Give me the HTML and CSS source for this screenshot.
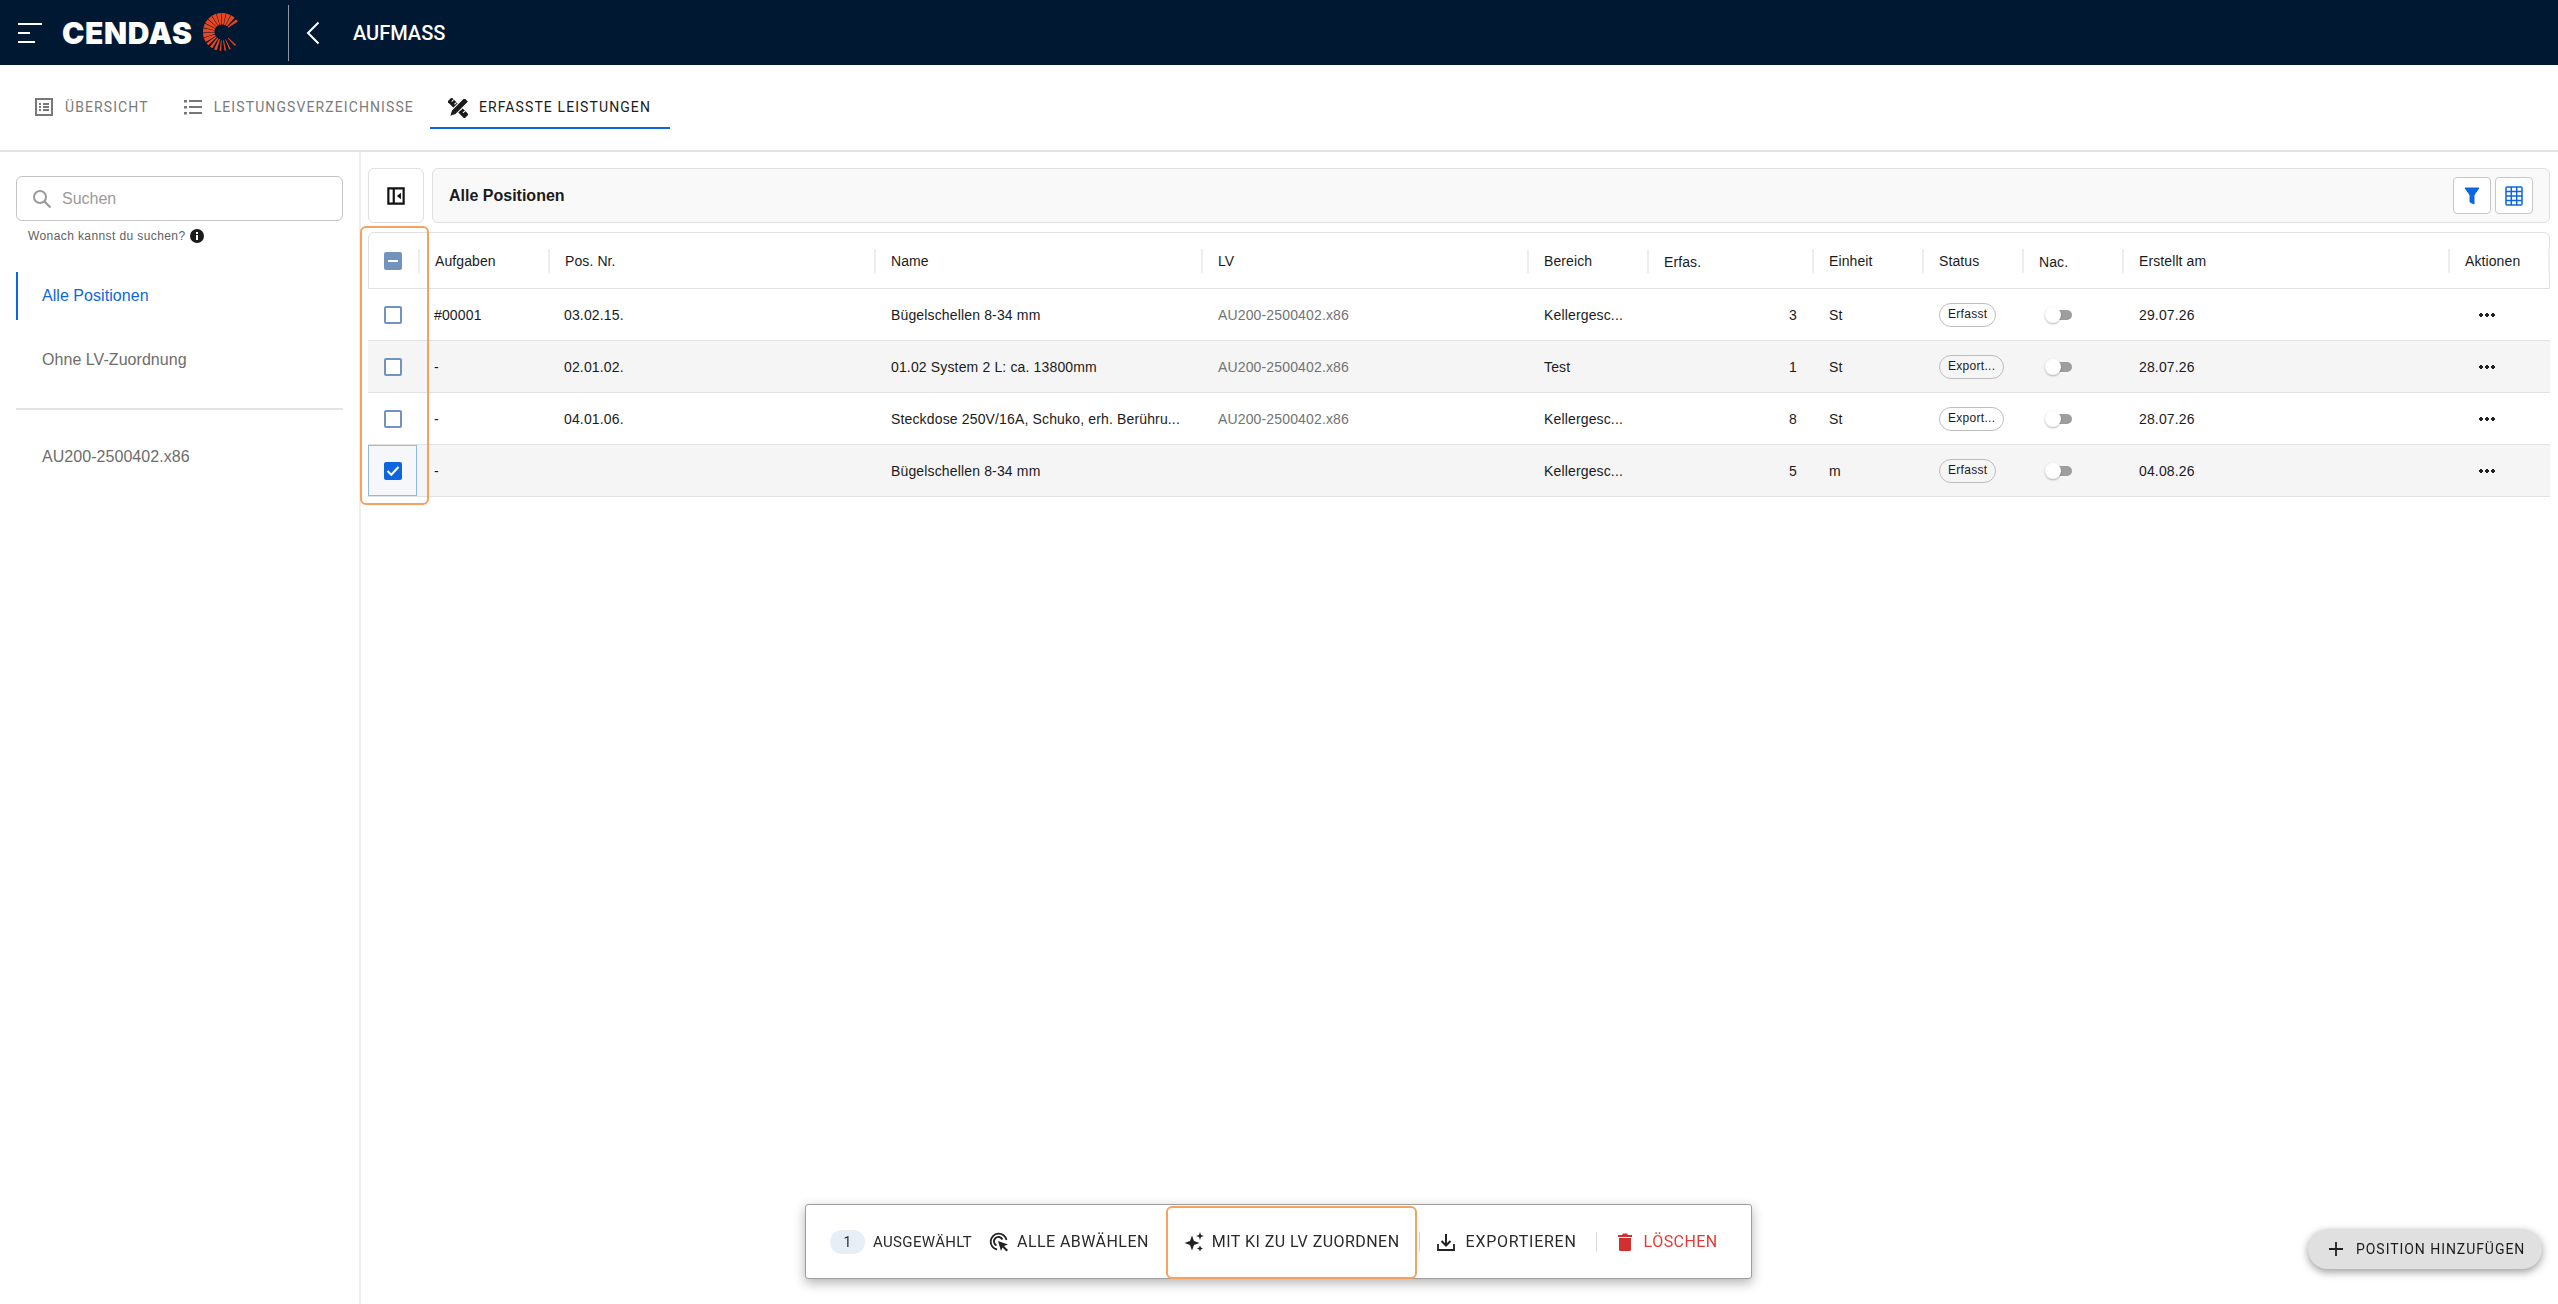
FILE: index.html
```html
<!DOCTYPE html>
<html lang="de">
<head>
<meta charset="utf-8">
<title>Aufmass</title>
<link rel="stylesheet" href="styles.css">
</head>
<body>
<header class="topbar">
  <svg class="burger" width="24" height="20" viewBox="0 0 24 20"><path d="M0 1h24M0 10h12M0 19h17" stroke="#fff" stroke-width="2"/></svg>
  <span class="logo-text">CENDAS</span>
  <svg class="logo-mark" width="38" height="38" viewBox="-19 -19 38 38">
    <defs>
      <path id="ray-a" d="M7.500-.8 19-2.200V2.200L7.500.8z" fill="#e8481f"/>
      <path id="ray-b" d="M7.500-.6 19-1.400V1.400L7.500.6z" fill="#e8481f"/>
      <path id="ray-c" d="M8.500-.4 19-.8V.8L8.500.4z" fill="#e8481f"/>
    </defs>
    <use href="#ray-b" transform="rotate(-38)"/>
    <use href="#ray-a" transform="rotate(-55)"/>
    <use href="#ray-a" transform="rotate(-70)"/>
    <use href="#ray-a" transform="rotate(-85)"/>
    <use href="#ray-a" transform="rotate(-100)"/>
    <use href="#ray-a" transform="rotate(-115)"/>
    <use href="#ray-a" transform="rotate(-130)"/>
    <use href="#ray-a" transform="rotate(-145)"/>
    <use href="#ray-a" transform="rotate(-160)"/>
    <use href="#ray-a" transform="rotate(-175)"/>
    <use href="#ray-a" transform="rotate(170)"/>
    <use href="#ray-a" transform="rotate(155)"/>
    <use href="#ray-b" transform="rotate(140)"/>
    <use href="#ray-b" transform="rotate(125)"/>
    <use href="#ray-b" transform="rotate(110)"/>
    <use href="#ray-c" transform="rotate(95)"/>
    <use href="#ray-c" transform="rotate(80)"/>
    <use href="#ray-c" transform="rotate(65)"/>
    <use href="#ray-c" transform="rotate(45)"/>
  </svg>
  <span class="topbar-divider"></span>
  <svg class="back" width="14" height="24" viewBox="0 0 14 24"><path d="M12.500 1.500 2 12l10.500 10.500" fill="none" stroke="#fff" stroke-width="2"/></svg>
  <span class="page-title">AUFMASS</span>
</header>

<nav class="tabs">
  <a class="tab">
    <svg width="18" height="18" viewBox="0 0 18 18"><path d="M1 1h16v16H1z" fill="none" stroke="#777" stroke-width="2"/><path d="M4 5h2v2H4zM8 5h6v2H8zM4 8h2v2H4zM8 8h6v2H8zM4 11h2v2H4zM8 11h6v2H8z" fill="#777"/></svg>
    <span>ÜBERSICHT</span>
  </a>
  <a class="tab">
    <svg width="18" height="18" viewBox="0 0 18 18"><path d="M0 2h3v2.400H0zM0 8h3v2.400H0zM0 14h3v2.400H0zM5 2h13v2H5zM5 8h13v2H5zM5 14h13v2H5z" fill="#777"/></svg>
    <span>LEISTUNGSVERZEICHNISSE</span>
  </a>
  <a class="tab tab-active">
    <svg width="20" height="20" viewBox="0 0 20 20">
      <g transform="rotate(-45 10 10)"><path d="M7 -2h6V22H7z" fill="#1b1b1b"/><path d="M10 1h3M10 5h3M10 9h3M10 13h3M10 17h3" stroke="#fff" stroke-width="1"/></g>
      <g transform="rotate(45 10 10)"><path d="M7 -2h6V16l-3 6-3-6z" fill="#1b1b1b" stroke="#fff" stroke-width="1"/></g>
    </svg>
    <span>ERFASSTE LEISTUNGEN</span>
  </a>
</nav>

<div class="body">
  <aside class="sidebar">
    <label class="search">
      <svg width="20" height="20" viewBox="0 0 20 20"><circle cx="8" cy="8" r="6" fill="none" stroke="#9a9a9a" stroke-width="2"/><path d="m12.500 12.500 6 6" stroke="#9a9a9a" stroke-width="2.200"/></svg>
      <span>Suchen</span>
    </label>
    <div class="hint">Wonach kannst du suchen?
      <svg width="14" height="14" viewBox="0 0 14 14"><circle cx="7" cy="7" r="7" fill="#1b1b1b"/><path d="M6 6h2v5H6zM6 3h2v2H6z" fill="#fff"/></svg>
    </div>
    <a class="side-item side-active">Alle Positionen</a>
    <a class="side-item">Ohne LV-Zuordnung</a>
    <hr class="side-rule">
    <a class="side-item">AU200-2500402.x86</a>
  </aside>

  <main class="content">
    <div class="toolbar">
      <button class="collapse">
        <svg width="18" height="18" viewBox="0 0 20 20"><path d="M1.500 1.500h17v17h-17zM7.500 1.500v17" fill="none" stroke="#111" stroke-width="2.400"/><path d="M15.500 6.500v7L11 10z" fill="#111"/></svg>
      </button>
      <div class="titlebar">
        <strong>Alle Positionen</strong>
        <div class="titlebar-actions">
          <button class="icon-btn">
            <svg width="16" height="18" viewBox="0 0 16 18"><path d="M1 1h14L10 8v9l-4-2V8z" fill="#0d66e0" stroke="#0d66e0" stroke-linejoin="round"/></svg>
          </button>
          <button class="icon-btn">
            <svg width="18" height="20" viewBox="0 0 18 20"><rect x="1" y="1" width="16" height="18" rx="1" fill="none" stroke="#0d66e0" stroke-width="1.500"/><path d="M6.300 1v18M11.700 1v18M1 5.500h16M1 10h16M1 14.500h16" stroke="#0d66e0" stroke-width="1.500"/></svg>
          </button>
        </div>
      </div>
    </div>

    <div class="table">
      <div class="row head">
        <div class="cell check"><span class="box box-mixed"></span></div>
        <div class="cell">Aufgaben</div>
        <div class="cell">Pos. Nr.</div>
        <div class="cell">Name</div>
        <div class="cell">LV</div>
        <div class="cell">Bereich</div>
        <div class="cell low">Erfas.</div>
        <div class="cell">Einheit</div>
        <div class="cell">Status</div>
        <div class="cell low">Nac.</div>
        <div class="cell">Erstellt am</div>
        <div class="cell">Aktionen</div>
      </div>

      <div class="row">
        <div class="cell check"><span class="box"></span></div>
        <div class="cell">#00001</div>
        <div class="cell">03.02.15.</div>
        <div class="cell">Bügelschellen 8-34 mm</div>
        <div class="cell muted">AU200-2500402.x86</div>
        <div class="cell">Kellergesc...</div>
        <div class="cell num">3</div>
        <div class="cell">St</div>
        <div class="cell"><span class="chip">Erfasst</span></div>
        <div class="cell"><span class="switch"></span></div>
        <div class="cell">29.07.26</div>
        <div class="cell more"><span class="dots"></span></div>
      </div>

      <div class="row alt">
        <div class="cell check"><span class="box"></span></div>
        <div class="cell">-</div>
        <div class="cell">02.01.02.</div>
        <div class="cell">01.02 System 2 L: ca. 13800mm</div>
        <div class="cell muted">AU200-2500402.x86</div>
        <div class="cell">Test</div>
        <div class="cell num">1</div>
        <div class="cell">St</div>
        <div class="cell"><span class="chip">Export...</span></div>
        <div class="cell"><span class="switch"></span></div>
        <div class="cell">28.07.26</div>
        <div class="cell more"><span class="dots"></span></div>
      </div>

      <div class="row">
        <div class="cell check"><span class="box"></span></div>
        <div class="cell">-</div>
        <div class="cell">04.01.06.</div>
        <div class="cell">Steckdose 250V/16A, Schuko, erh. Berühru...</div>
        <div class="cell muted">AU200-2500402.x86</div>
        <div class="cell">Kellergesc...</div>
        <div class="cell num">8</div>
        <div class="cell">St</div>
        <div class="cell"><span class="chip">Export...</span></div>
        <div class="cell"><span class="switch"></span></div>
        <div class="cell">28.07.26</div>
        <div class="cell more"><span class="dots"></span></div>
      </div>

      <div class="row alt">
        <div class="cell check check-focus">
          <span class="box box-on"><svg width="14" height="12" viewBox="0 0 14 12"><path d="m1.500 6 3.800 3.800L12.500 2" fill="none" stroke="#fff" stroke-width="2"/></svg></span>
        </div>
        <div class="cell">-</div>
        <div class="cell"></div>
        <div class="cell">Bügelschellen 8-34 mm</div>
        <div class="cell muted"></div>
        <div class="cell">Kellergesc...</div>
        <div class="cell num">5</div>
        <div class="cell">m</div>
        <div class="cell"><span class="chip">Erfasst</span></div>
        <div class="cell"><span class="switch"></span></div>
        <div class="cell">04.08.26</div>
        <div class="cell more"><span class="dots"></span></div>
      </div>

      <span class="callout callout-column"></span>
    </div>
  </main>
</div>

<div class="actionbar">
  <span class="count">1</span>
  <span class="selected-label">AUSGEWÄHLT</span>
  <button class="action deselect">
    <svg width="20" height="20" viewBox="0 0 20 20"><path d="M8 17.500A8 8 0 1 1 17.500 8" fill="none" stroke="#222" stroke-width="1.800"/><path d="M7.500 13.500A4.500 4.500 0 1 1 13.500 7.500" fill="none" stroke="#222" stroke-width="1.800"/><path d="m9 9 10 3.500-4 1.500 4 4-1.500 1.500-4-4L12 19z" fill="#222"/></svg>
    ALLE ABWÄHLEN
  </button>
  <button class="action ai">
    <svg width="21" height="21" viewBox="0 0 21 21"><path d="M8 4.500 10 10l5.500 2L10 14l-2 5.500L6 14l-5.500-2L6 10z" fill="#222"/><path d="m16 1 1 3 3 1-3 1-1 3-1-3-3-1 3-1zM16 14.500l.9 2.100 2.100.9-2.100.9L16 20.500l-.9-2.100-2.100-.9 2.100-.9z" fill="#222"/></svg>
    MIT KI ZU LV ZUORDNEN
  </button>
  <span class="action-sep"></span>
  <button class="action export">
    <svg width="18" height="18" viewBox="0 0 18 18"><path d="M1 11v6h16v-6" fill="none" stroke="#222" stroke-width="1.800"/><path d="M9 1v11M4.500 8 9 12.500 13.500 8" fill="none" stroke="#222" stroke-width="2"/></svg>
    EXPORTIEREN
  </button>
  <span class="action-sep"></span>
  <button class="action danger">
    <svg width="14" height="18" viewBox="0 0 14 18"><path d="M1 5h12v11.500a1.500 1.500 0 0 1-1.500 1.500h-9A1.500 1.500 0 0 1 1 16.500zM0 2h4l1-1.500h4L10 2h4v2H0z" fill="#d32f2f"/></svg>
    LÖSCHEN
  </button>
  <span class="callout callout-ai"></span>
</div>

<button class="fab">
  <svg width="14" height="14" viewBox="0 0 14 14"><path d="M7 0v14M0 7h14" stroke="#222" stroke-width="1.800"/></svg>
  POSITION HINZUFÜGEN
</button>
</body>
</html>
```
FILE: styles.css
```css
* { box-sizing: border-box; }

html, body { height: 100%; }

body {
  margin: 0;
  height: 1304px;
  overflow: hidden;
  display: flex;
  flex-direction: column;
  background: #fff;
  color: #1b1b1b;
  font-family: "Liberation Sans", Arial, sans-serif;
  font-size: 14px;
}

button { font: inherit; color: inherit; background: none; border: 0; padding: 0; }

/* top bar */
.topbar {
  flex: none;
  height: 65px;
  display: flex;
  align-items: center;
  background: #011833;
  color: #fff;
}
.burger { margin-left: 18px; }
.logo-text {
  flex: none;
  width: 130px;
  margin-left: 20px;
  font-family: Inter, Roboto, sans-serif;
  font-weight: 900;
  font-size: 30px;
  line-height: 1;
  letter-spacing: .6px;
  white-space: nowrap;
}
.logo-mark { flex: none; margin: -1px 0 0 11px; }
.topbar-divider {
  flex: none;
  width: 1px;
  height: 56px;
  margin-left: 47px;
  background: #8b96a5;
}
.back { flex: none; margin-left: 17px; }
.page-title {
  margin-left: 33px;
  font-family: Roboto, sans-serif;
  font-weight: 500;
  font-size: 20px;
}

/* tabs */
.tabs {
  flex: none;
  height: 87px;
  padding: 0 0 0 19px;
  display: flex;
  align-items: flex-start;
  border-bottom: 2px solid #e4e4e4;
  font-family: Roboto, sans-serif;
  font-size: 14px;
  letter-spacing: 1.100px;
  color: #7b7b7b;
}
.tab {
  height: 64px;
  padding: 32px 16px 0;
  display: flex;
  align-items: flex-start;
  gap: 12px;
  line-height: 20px;
  white-space: nowrap;
  border-bottom: 2px solid transparent;
}
.tab svg { flex: none; margin-top: 1px; }
.tab + .tab { margin-left: 3px; }
.tab-active {
  margin-left: 0 !important;
  padding: 32px 19px 0 18px;
  gap: 11px;
  color: #1b1b1b;
  border-bottom-color: #0d66e0;
}

/* layout */
.body {
  flex: 1;
  min-height: 0;
  display: flex;
}
.sidebar {
  flex: none;
  width: 361px;
  padding: 24px 16px 0;
  border-right: 2px solid #eeeeee;
}
.search {
  height: 45px;
  padding: 0 15px;
  display: flex;
  align-items: center;
  gap: 10px;
  border: 1px solid #c4c4c4;
  border-radius: 6px;
  color: #9a9a9a;
  font-size: 16px;
}
.hint {
  margin-top: 8px;
  padding-left: 12px;
  display: flex;
  align-items: center;
  gap: 5px;
  font-size: 12px;
  line-height: 14px;
  letter-spacing: .4px;
  color: #5f5f5f;
}
.side-item {
  display: flex;
  align-items: center;
  height: 48px;
  padding-left: 26px;
  margin-top: 16px;
  font-size: 16px;
  letter-spacing: .05px;
  color: #6d6d6d;
}
.side-active {
  margin-top: 29px;
  color: #0d66e0;
  border-left: 2px solid #0d66e0;
  padding-left: 24px;
}
.side-rule {
  height: 2px;
  margin: 24px 0 0;
  border: 0;
  background: #e4e4e4;
}
.side-rule + .side-item { margin-top: 23px; }

.content {
  flex: 1;
  min-width: 0;
  padding: 16px 8px 0 7px;
}
.toolbar {
  display: flex;
  gap: 8px;
  height: 55px;
}
.collapse {
  flex: none;
  width: 56px;
  display: flex;
  align-items: center;
  justify-content: center;
  border: 1px solid #e0e0e0;
  border-radius: 6px;
}
.titlebar {
  flex: 1;
  display: flex;
  align-items: center;
  justify-content: space-between;
  padding: 0 16px;
  background: #f9f9f9;
  border: 1px solid #e0e0e0;
  border-radius: 6px;
  font-size: 16px;
}
.titlebar-actions { display: flex; gap: 4px; }
.icon-btn {
  width: 38px;
  height: 37px;
  display: flex;
  align-items: center;
  justify-content: center;
  background: #fff;
  border: 1px solid #c8c8c8;
  border-radius: 4px;
}

/* table */
.table {
  position: relative;
  margin-top: 9px;
}
.row {
  display: grid;
  grid-template-columns: 51px 130px 327px 327px 326px 120px 165px 110px 100px 100px 326px 101px;
  height: 52px;
  border-bottom: 1px solid #e2e2e2;
  letter-spacing: .15px;
}
.alt { background: #f5f5f5; }
.cell {
  min-width: 0;
  padding-left: 15px;
  display: flex;
  align-items: center;
  white-space: nowrap;
  overflow: hidden;
}
.head {
  grid-template-columns: 51px 130px 326px 327px 326px 120px 165px 110px 100px 100px 326px 100px;
  height: 57px;
  border: 1px solid #e0e0e0;
  border-radius: 6px 6px 0 0;
  letter-spacing: .1px;
}
.head .cell {
  position: relative;
  padding-left: 15px;
}
.head .cell::after {
  content: "";
  position: absolute;
  right: 0;
  top: 16px;
  height: 24px;
  width: 2px;
  background: #eeeeee;
}
.head .low { padding-top: 2px; }
.muted { color: #737373; }
.num { justify-content: flex-end; padding-right: 17px; }
.check { padding-left: 16px; }
.check-focus {
  margin-right: 2px;
  background: #f5f7fb;
  border: 1px solid #90b8ea;
  padding-left: 15px;
}
.box {
  width: 18px;
  height: 18px;
  display: flex;
  align-items: center;
  justify-content: center;
  border: 2px solid #7393bf;
  border-radius: 2px;
  background: #fff;
}
.box-mixed { background: #7393bf; }
.box-mixed::after { content: ""; width: 10px; height: 2px; background: #fff; }
.box-on { background: #0d66e0; border-color: #0d66e0; }
.chip {
  height: 24px;
  padding: 0 8px 2px;
  display: inline-flex;
  align-items: center;
  border: 1px solid #bdbdbd;
  border-radius: 12px;
  background: #fff;
  font-size: 12px;
  letter-spacing: .3px;
}
.alt .chip { background: #f5f5f5; }
.switch {
  position: relative;
  display: block;
  width: 30px;
  height: 10px;
  margin-left: 6px;
}
.switch::before {
  content: "";
  position: absolute;
  left: 12px;
  top: 0;
  width: 15px;
  height: 10px;
  border-radius: 0 5px 5px 0;
  background: #9e9e9e;
}
.switch::after {
  content: "";
  position: absolute;
  left: 0;
  top: -3px;
  width: 16px;
  height: 16px;
  border-radius: 50%;
  background: #fff;
  box-shadow: 0 1px 2px rgba(0,0,0,.3);
}
.more { padding-left: 29px; }
.dots {
  width: 16px;
  height: 4px;
  background: radial-gradient(circle 2px at 2px 2px, #222 98%, transparent) 0 0 / 6px 4px repeat-x;
}

/* callouts */
.callout {
  position: absolute;
  border: 2px solid #f5a25f;
  border-radius: 6px;
  pointer-events: none;
}
.callout-column { left: -8px; top: -6px; width: 69px; height: 279px; }
.callout-ai { left: 360px; top: 1px; width: 251px; height: 73px; }

/* bottom action bar */
.actionbar {
  position: fixed;
  left: 805px;
  top: 1204px;
  width: 947px;
  height: 75px;
  display: flex;
  align-items: center;
  padding-left: 24px;
  background: #fff;
  border: 1px solid #9e9e9e;
  border-radius: 3px;
  box-shadow: 0 4px 12px rgba(0,0,0,.3);
  font-family: Roboto, sans-serif;
  font-size: 16px;
  color: #2a2a2a;
}
.count {
  flex: none;
  width: 35px;
  height: 24px;
  border-radius: 12px;
  background: #e8eef6;
  display: flex;
  align-items: center;
  justify-content: center;
  font-size: 14px;
  margin-right: 8px;
}
.selected-label { flex: none; width: 99px; font-size: 15px; letter-spacing: .35px; white-space: nowrap; }
.action {
  flex: none;
  display: flex;
  align-items: center;
  gap: 8px;
  white-space: nowrap;
  letter-spacing: .45px;
}
.action svg { flex: none; }
.deselect { margin-left: 17px; }
.ai { margin-left: 35px; gap: 7px; }
.export { margin-left: 17px; gap: 11px; letter-spacing: .75px; }
.danger { margin-left: 21px; gap: 12px; color: #e53935; }
.action-sep {
  flex: none;
  width: 1px;
  height: 20px;
  margin-left: 19px;
  background: #d8d8d8;
}

/* floating button */
.fab {
  position: fixed;
  left: 2308px;
  top: 1229px;
  width: 234px;
  height: 40px;
  display: flex;
  align-items: center;
  gap: 13px;
  padding-left: 21px;
  background: #e0e0e0;
  border-radius: 20px;
  box-shadow: 0 3px 8px rgba(0,0,0,.4);
  font-family: Roboto, sans-serif;
  font-size: 14px;
  letter-spacing: .95px;
  white-space: nowrap;
}
```
